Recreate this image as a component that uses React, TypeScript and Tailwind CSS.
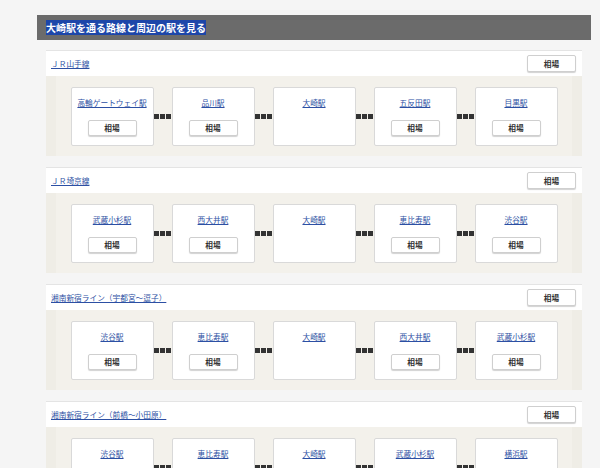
import React from "react";

type Line = { name: string; stations: string[] };

const lines: Line[] = [
  { name: "ＪＲ山手線", stations: ["高輪ゲートウェイ駅", "品川駅", "大崎駅", "五反田駅", "目黒駅"] },
  { name: "ＪＲ埼京線", stations: ["武蔵小杉駅", "西大井駅", "大崎駅", "恵比寿駅", "渋谷駅"] },
  { name: "湘南新宿ライン（宇都宮～逗子）", stations: ["渋谷駅", "恵比寿駅", "大崎駅", "西大井駅", "武蔵小杉駅"] },
  { name: "湘南新宿ライン（前橋～小田原）", stations: ["渋谷駅", "恵比寿駅", "大崎駅", "武蔵小杉駅", "横浜駅"] },
];

const font = { fontFamily: '"Noto Sans CJK JP", "Noto Sans", sans-serif' };

function PriceButton({ small }: { small?: boolean }) {
  return (
    <button
      className={`block w-[49px] ${small ? "h-[16px]" : "h-[17px]"} bg-white border border-[#cfcfcf] rounded-[2px] shadow-[0_1px_1px_rgba(0,0,0,0.18)] text-[7.7px] font-bold text-[#333] leading-none`}
    >
      相場
    </button>
  );
}

function Dots() {
  return (
    <div className="w-[18px] flex items-center justify-center gap-[1px]">
      <span className="w-[5px] h-[5px] bg-[#333]" />
      <span className="w-[5px] h-[5px] bg-[#333]" />
      <span className="w-[5px] h-[5px] bg-[#333]" />
    </div>
  );
}

function StationCard({ name, current }: { name: string; current: boolean }) {
  return (
    <div className="w-[83px] h-[59px] bg-white border border-[#d9d9d9] rounded-[2px] flex flex-col items-center pt-[9px]">
      <a href="#" className="block h-[12px] text-[7.7px] leading-[12px] text-[#2c4fa3] underline whitespace-nowrap">
        {name}
      </a>
      {!current && (
        <div className="mt-[11px] flex">
          <PriceButton small />
        </div>
      )}
    </div>
  );
}

function LineSection({ line }: { line: Line }) {
  return (
    <div className="mb-[11px]">
      <div className="h-[26px] bg-white border-t border-[#e4e4e4] flex items-center justify-between pl-[5px] pr-[6px]">
        <a href="#" className="text-[7.7px] text-[#2c4fa3] underline whitespace-nowrap">
          {line.name}
        </a>
        <PriceButton />
      </div>
      <div className="h-[80px] bg-[#f3f1eb] border-x-[10px] border-[#efede6] flex items-center justify-center">
        {line.stations.map((s, i) => (
          <React.Fragment key={i}>
            {i > 0 && <Dots />}
            <StationCard name={s} current={s === "大崎駅"} />
          </React.Fragment>
        ))}
      </div>
    </div>
  );
}

export default function App() {
  return (
    <div className="w-[600px] h-[468px] overflow-hidden bg-[#f5f5f5]" style={font}>
      <div className="ml-[37px] w-[554px] pt-[15px]">
        <div className="h-[25px] bg-[#6b6b6b] flex items-center px-[9px]">
          <span className="bg-[#1d46a9] text-white font-bold text-[10px] leading-[15px] whitespace-nowrap">
            大崎駅を通る路線と周辺の駅を見る
          </span>
        </div>
        <div className="mx-[9px] mt-[10px]">
          {lines.map((l, i) => (
            <LineSection key={i} line={l} />
          ))}
        </div>
      </div>
    </div>
  );
}
